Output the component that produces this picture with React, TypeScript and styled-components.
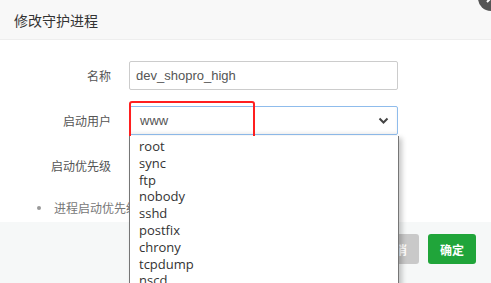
import React from "react";
import styled, { createGlobalStyle } from "styled-components";

const GlobalStyle = createGlobalStyle`
  html, body {
    margin: 0;
    padding: 0;
    background: #ffffff;
    font-family: "Liberation Sans", "Noto Sans CJK SC", sans-serif;
  }
`;

const Layer = styled.div`
  position: relative;
  width: 491px;
  height: 283px;
  overflow: hidden;
  background: #fff;
  display: flex;
  flex-direction: column;
`;

const Header = styled.div`
  height: 40px;
  flex-shrink: 0;
  background: #f8f8f8;
  border-bottom: 1px solid #eee;
  box-sizing: border-box;
  display: flex;
  align-items: center;
  padding-left: 14px;
  font-size: 14px;
  color: #333;
  font-family: "Noto Sans CJK SC", sans-serif;
`;

const CloseBtn = styled.div`
  position: absolute;
  top: -15px;
  right: -13px;
  width: 26px;
  height: 26px;
  border-radius: 50%;
  background: #555;
  display: flex;
  align-items: center;
  justify-content: center;
`;

const Body = styled.div`
  flex: 1;
  padding: 21px 0 0;
  display: flex;
  flex-direction: column;
  gap: 16px;
`;

const Row = styled.div`
  display: flex;
  align-items: center;
  height: 29px;
`;

const Label = styled.div`
  width: 111px;
  padding-right: 18px;
  text-align: right;
  font-size: 12px;
  color: #555;
  font-family: "Noto Sans CJK SC", sans-serif;
`;

const TextInput = styled.div<{ $focus?: boolean }>`
  width: 269px;
  height: 29px;
  box-sizing: border-box;
  border: 1px solid ${(p) => (p.$focus ? "#8fbcec" : "#ccc")};
  border-radius: 2px;
  display: flex;
  align-items: center;
  justify-content: space-between;
  padding: 0 8px 0 ${(p) => (p.$focus ? "10px" : "6px")};
  font-size: 13px;
  color: #555;
  box-shadow: ${(p) =>
    p.$focus ? "inset 0 -2px 3px rgba(0,0,0,0.06)" : "none"};
`;

const Note = styled.div`
  margin-top: 3px;
  padding-left: 37px;
  display: flex;
  align-items: center;
  gap: 13px;
  font-size: 12px;
  color: #777;
  font-family: "Noto Sans CJK SC", sans-serif;
`;

const Dot = styled.span`
  width: 4px;
  height: 4px;
  border-radius: 50%;
  background: #999;
`;

const Footer = styled.div`
  height: 49px;
  flex-shrink: 0;
  background: #f6f8f8;
  display: flex;
  justify-content: flex-end;
  align-items: flex-start;
  padding: 12px 15px 0 0;
  gap: 9px;
`;

const Button = styled.div<{ $kind: "cancel" | "ok" }>`
  width: 48px;
  height: 30px;
  border-radius: 3px;
  background: ${(p) => (p.$kind === "ok" ? "#20a53a" : "#c9c9c9")};
  color: #fff;
  font-size: 12px;
  font-weight: bold;
  display: flex;
  align-items: center;
  justify-content: center;
  font-family: "Noto Sans CJK SC", sans-serif;
`;

const Highlight = styled.div`
  position: absolute;
  left: 129px;
  top: 101px;
  width: 126px;
  height: 38px;
  box-sizing: border-box;
  border: 2px solid #ff1f1f;
  border-radius: 3px;
`;

const Dropdown = styled.ul`
  position: absolute;
  left: 129px;
  top: 136px;
  width: 270px;
  height: 160px;
  box-sizing: border-box;
  margin: 0;
  padding: 2px 0 0 9px;
  list-style: none;
  background: #fff;
  border-left: 1px solid #767676;
  border-right: 1px solid #767676;
  box-shadow: 3px 2px 5px rgba(0, 0, 0, 0.22);
`;

const Option = styled.li`
  height: 16.8px;
  line-height: 16.8px;
  font-size: 13px;
  color: #333;
  font-family: "Open Sans", "Liberation Sans", sans-serif;
`;

const users = [
  "root",
  "sync",
  "ftp",
  "nobody",
  "sshd",
  "postfix",
  "chrony",
  "tcpdump",
  "nscd",
];

export default function App() {
  return (
    <Layer>
      <GlobalStyle />
      <Header>修改守护进程</Header>
      <CloseBtn>
        <svg width="12" height="12" viewBox="0 0 12 12">
          <path d="M2 2 L10 10 M10 2 L2 10" stroke="#fff" strokeWidth="2" />
        </svg>
      </CloseBtn>
      <Body>
        <Row>
          <Label>名称</Label>
          <TextInput>dev_shopro_high</TextInput>
        </Row>
        <Row>
          <Label>启动用户</Label>
          <TextInput $focus>
            <span>www</span>
            <svg width="11" height="8" viewBox="0 0 11 8">
              <path
                d="M1.5 1.5 L5.5 5.5 L9.5 1.5"
                fill="none"
                stroke="#444"
                strokeWidth="2"
              />
            </svg>
          </TextInput>
        </Row>
        <Row>
          <Label>启动优先级</Label>
          <TextInput />
        </Row>
        <Note>
          <Dot />
          <span>进程启动优先级</span>
        </Note>
      </Body>
      <Footer>
        <Button $kind="cancel">取消</Button>
        <Button $kind="ok">确定</Button>
      </Footer>
      <Highlight />
      <Dropdown>
        {users.map((u) => (
          <Option key={u}>{u}</Option>
        ))}
      </Dropdown>
    </Layer>
  );
}
